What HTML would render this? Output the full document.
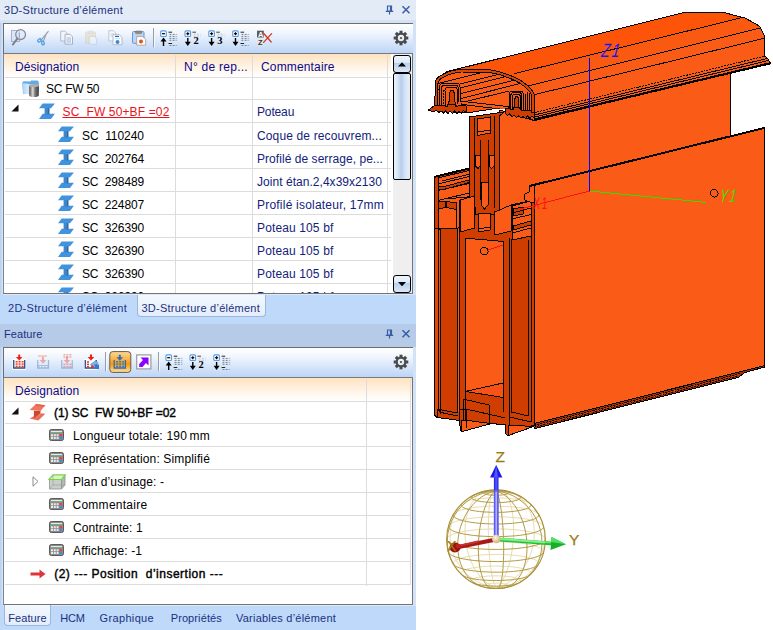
<!DOCTYPE html>
<html><head><meta charset="utf-8"><title>3D-Structure</title>
<style>
html,body{margin:0;padding:0;}
body{width:773px;height:630px;position:relative;overflow:hidden;background:#fff;font-family:"Liberation Sans",sans-serif;font-size:12px;color:#000;}
.abs{position:absolute;}
#left{position:absolute;left:0;top:0;width:416px;height:630px;background:#bfd9fa;overflow:hidden;}
.title{position:absolute;left:0;width:416px;color:#15245c;font-size:12px;line-height:20px;}
.title span{position:absolute;left:4px;top:0;white-space:nowrap;}
.tb{position:absolute;left:3px;width:410px;box-sizing:border-box;border-top:1px solid #6d6d6d;border-left:1px solid #6d6d6d;border-bottom:1px solid #7a7a7a;background:linear-gradient(#ffffff 0%,#f1f6fd 30%,#d3e3f9 70%,#bcd5f7 100%);}
.tree{position:absolute;background:#fff;overflow:hidden;}
.hdr{position:absolute;left:0;top:0;height:23px;background:linear-gradient(#ffe2c1,#fff3e4 55%,#ffffff);}
.t{position:absolute;white-space:nowrap;line-height:20px;height:20px;}
.h{color:#0a0a8c;}
.nv{color:#12227a;}
.b{font-weight:normal;-webkit-text-stroke:0.4px #000;}
.hl{position:absolute;height:1px;background:#dcdcdc;}
.vl{position:absolute;width:1px;background:#dcdcdc;}
.tabs{position:absolute;left:0;width:416px;height:22px;color:#15245c;font-size:12px;}
.tabs span{position:absolute;top:0;line-height:22px;white-space:nowrap;}
.atab{position:absolute;box-sizing:border-box;border:1px solid #9db7dc;border-top:none;border-radius:0 0 4px 4px;background:linear-gradient(#f4f8fe,#e3edfb);}
.sbtn{position:absolute;left:392px;width:18px;height:18px;box-sizing:border-box;border:1px solid #000;border-radius:3px;background:linear-gradient(#eef5fd 0%,#dfeaf8 40%,#b9cfee 45%,#d9e7f8 100%);}
</style></head><body>
<div id="left">
<div class="abs" style="left:0;top:0;width:416px;height:23px;background:#d5e2f3"></div>
<div class="abs" style="left:0;top:0;width:416px;height:20px;background:#e3ebf6"></div>
<span id="t_title1" class="t " style="left:4.00px;top:-0.01px;font-size:11px;letter-spacing:0.268px;color:#1b3180">3D-Structure d’élément</span>
<svg class="abs" style="left:385px;top:5px" width="28" height="10" viewBox="0 0 28 10"><path d="M2.5,1 h4 v5 h-4 Z M5.5,1 v5 M0.8,6.3 h7.4 M4.5,6.5 v3" stroke="#3a5ea6" stroke-width="1.2" fill="none"/><path d="M17.5,1.2 L24.5,8.2 M24.5,1.2 L17.5,8.2" stroke="#3a5ea6" stroke-width="1.5" fill="none"/></svg>
<div class="abs" style="left:0;top:23px;width:3px;height:271px;background:linear-gradient(90deg,#b4cdf0,#d9e7f7)"></div>
<div class="abs" style="left:413px;top:23px;width:3px;height:272px;background:#d3e2f6"></div>
<div class="abs" style="left:412px;top:54px;width:1px;height:240px;background:#747474"></div>
<div class="tb" id="tb1" style="top:23px;height:31px"><svg class="abs" style="left:-4px;top:-24px" width="416" height="60" viewBox="0 0 416 60"><rect x="11.5" y="30.5" width="8" height="11" fill="#d4e3f8" stroke="#7a7ab8" stroke-width="0.8" opacity="0.7"/><circle cx="20.6" cy="34.6" r="4.9" fill="#dbeafc" fill-opacity="0.75" stroke="#8a8a90" stroke-width="1.3"/><path d="M17.3,38.6 L12.8,44.6" stroke="#7d7d84" stroke-width="1.8" stroke-linecap="round"/><path d="M19.2,32.5 V38" stroke="#6a6ab0" stroke-width="0.7" opacity="0.8"/><g opacity="0.8"><path d="M41.2,40 L48.3,31.4 M43.2,41.8 L46.8,32.6" stroke="#8d949e" stroke-width="1.2" stroke-linecap="round"/><ellipse cx="39.4" cy="40.4" rx="1.9" ry="1.3" fill="none" stroke="#2b8fe0" stroke-width="1.3" transform="rotate(-35 39.4 40.4)"/><ellipse cx="42.9" cy="43" rx="1.3" ry="1.9" fill="none" stroke="#2b8fe0" stroke-width="1.3" transform="rotate(-20 42.9 43)"/></g><g opacity="0.85"><path d="M60.7,31.2 h4.3 l2,2 v7.8 h-6.3 Z" fill="#f4f6fa" stroke="#9aa4b8" stroke-width="0.8"/><path d="M65,34.3 h5 l2.5,2.5 v7.4 h-7.5 Z" fill="#f8f9fc" stroke="#8c96ac" stroke-width="0.8"/><path d="M66.5,38 h4.5 M66.5,40 h4.5 M66.5,42 h4.5" stroke="#7d9cc8" stroke-width="0.8"/></g><g opacity="0.5"><rect x="85.7" y="32" width="9.8" height="11.2" rx="1" fill="#e8d9b0" stroke="#cbb98a" stroke-width="0.7"/><rect x="88.3" y="31" width="4.6" height="2.4" rx="0.8" fill="#d8d8d8" stroke="#aaa" stroke-width="0.5"/><path d="M89.3,36.4 h5 l2.3,2.3 v5.5 h-7.3 Z" fill="#f6f8fc" stroke="#a9b4c8" stroke-width="0.7"/></g><g><path d="M108.8,30.7 h4.6 l2.3,2.3 v8 h-6.9 Z" fill="#f6f8fb" stroke="#b4bccb" stroke-width="0.8"/><path d="M110.3,34 h3.5 M110.3,36 h2.5" stroke="#b9c8e0" stroke-width="0.8"/><path d="M113,34.4 h6 l3,3 v7.3 h-9 Z" fill="#fbfcfe" stroke="#a4adbf" stroke-width="0.8"/><path d="M115,36.4 h4" stroke="#2a5bd0" stroke-width="1.2"/><path d="M115,38.6 h5" stroke="#c4d2e8" stroke-width="0.8"/><circle cx="117.5" cy="42" r="2" fill="#2f8fd8"/></g><g><rect x="132.5" y="31.5" width="11.5" height="11.8" rx="1.2" fill="#bcd6f7" stroke="#5b8fd0" stroke-width="0.9"/><rect x="135.4" y="31" width="6.4" height="2.6" rx="0.8" fill="#9a8472" stroke="#7a6656" stroke-width="0.5"/><path d="M136.7,36.4 h6 l3,3 v5.8 h-9 Z" fill="#fdfdfd" stroke="#a89890" stroke-width="0.8"/><circle cx="141" cy="41.6" r="2" fill="#e8531c"/></g><path d="M153.5,28 V47.3" stroke="#9a9cad" stroke-width="1"/><path d="M154.5,28 V47.3" stroke="#f5f8fd" stroke-width="1"/><rect x="160.7" y="30.9" width="5.6" height="5.6" rx="1" fill="#fdfdfd" stroke="#5b9be3" stroke-width="1.1"/><path d="M162.0,33.7 h3" stroke="#000" stroke-width="1.2"/><path d="M163.5,46 V40" stroke="#000" stroke-width="1.4"/><polygon points="160.5,41.6 163.5,37.6 166.5,41.6" fill="#000"/><path d="M168.5,32.2 h3.6 M168.5,43.5 h3.6" stroke="#222" stroke-width="1"/><path d="M169.3,34.4 h7" stroke="#6a9a8a" stroke-width="0.9" stroke-dasharray="2,1.2"/><path d="M170.1,34.4 h7" stroke="#8a70b8" stroke-width="0.9" stroke-dasharray="1,2.2" opacity="0.8"/><path d="M169.3,36.4 h7" stroke="#6a9a8a" stroke-width="0.9" stroke-dasharray="2,1.2"/><path d="M170.1,36.4 h7" stroke="#8a70b8" stroke-width="0.9" stroke-dasharray="1,2.2" opacity="0.8"/><path d="M169.3,38.4 h7" stroke="#6a9a8a" stroke-width="0.9" stroke-dasharray="2,1.2"/><path d="M170.1,38.4 h7" stroke="#8a70b8" stroke-width="0.9" stroke-dasharray="1,2.2" opacity="0.8"/><path d="M169.3,40.3 h7" stroke="#6a9a8a" stroke-width="0.9" stroke-dasharray="2,1.2"/><path d="M170.1,40.3 h7" stroke="#8a70b8" stroke-width="0.9" stroke-dasharray="1,2.2" opacity="0.8"/><path d="M169.3,45.5 h7" stroke="#6a9a8a" stroke-width="0.9" stroke-dasharray="2,1.2"/><path d="M170.1,45.5 h7" stroke="#8a70b8" stroke-width="0.9" stroke-dasharray="1,2.2" opacity="0.8"/><rect x="185.0" y="30.9" width="5.6" height="5.6" rx="1" fill="#fdfdfd" stroke="#5b9be3" stroke-width="1.1"/><path d="M186.3,33.7 h3" stroke="#000" stroke-width="1.2"/><path d="M187.8,32.2 v3" stroke="#000" stroke-width="1.2"/><path d="M187.8,38 V43" stroke="#000" stroke-width="1.4"/><polygon points="184.8,41.8 187.8,46 190.8,41.8" fill="#000"/><path d="M192.4,32.2 h3.6" stroke="#444" stroke-width="1"/><path d="M193.6,34.2 h7" stroke="#9ab8b0" stroke-width="0.9" stroke-dasharray="2,1.2" opacity="0.7"/><path d="M193.6,36.2 h7" stroke="#9ab8b0" stroke-width="0.9" stroke-dasharray="2,1.2" opacity="0.7"/><text x="193.4" y="44" font-family="Liberation Serif,serif" font-weight="bold" font-size="10.5" fill="#000">2</text><rect x="208.8" y="30.9" width="5.6" height="5.6" rx="1" fill="#fdfdfd" stroke="#5b9be3" stroke-width="1.1"/><path d="M210.1,33.7 h3" stroke="#000" stroke-width="1.2"/><path d="M211.6,32.2 v3" stroke="#000" stroke-width="1.2"/><path d="M211.6,38 V43" stroke="#000" stroke-width="1.4"/><polygon points="208.6,41.8 211.6,46 214.6,41.8" fill="#000"/><path d="M216.2,32.2 h3.6" stroke="#444" stroke-width="1"/><path d="M217.4,34.2 h7" stroke="#9ab8b0" stroke-width="0.9" stroke-dasharray="2,1.2" opacity="0.7"/><path d="M217.4,36.2 h7" stroke="#9ab8b0" stroke-width="0.9" stroke-dasharray="2,1.2" opacity="0.7"/><text x="217.2" y="44" font-family="Liberation Serif,serif" font-weight="bold" font-size="10.5" fill="#000">3</text><rect x="232.7" y="30.9" width="5.6" height="5.6" rx="1" fill="#fdfdfd" stroke="#5b9be3" stroke-width="1.1"/><path d="M234.0,33.7 h3" stroke="#000" stroke-width="1.2"/><path d="M235.5,32.2 v3" stroke="#000" stroke-width="1.2"/><path d="M235.5,38 V43" stroke="#000" stroke-width="1.4"/><polygon points="232.5,41.8 235.5,46 238.5,41.8" fill="#000"/><path d="M240.5,32.2 h3.6 M240.5,43.5 h3.6" stroke="#222" stroke-width="1"/><path d="M241.3,34.4 h7" stroke="#6a9a8a" stroke-width="0.9" stroke-dasharray="2,1.2"/><path d="M242.1,34.4 h7" stroke="#8a70b8" stroke-width="0.9" stroke-dasharray="1,2.2" opacity="0.8"/><path d="M241.3,36.4 h7" stroke="#6a9a8a" stroke-width="0.9" stroke-dasharray="2,1.2"/><path d="M242.1,36.4 h7" stroke="#8a70b8" stroke-width="0.9" stroke-dasharray="1,2.2" opacity="0.8"/><path d="M241.3,38.4 h7" stroke="#6a9a8a" stroke-width="0.9" stroke-dasharray="2,1.2"/><path d="M242.1,38.4 h7" stroke="#8a70b8" stroke-width="0.9" stroke-dasharray="1,2.2" opacity="0.8"/><path d="M241.3,40.3 h7" stroke="#6a9a8a" stroke-width="0.9" stroke-dasharray="2,1.2"/><path d="M242.1,40.3 h7" stroke="#8a70b8" stroke-width="0.9" stroke-dasharray="1,2.2" opacity="0.8"/><path d="M241.3,45.5 h7" stroke="#6a9a8a" stroke-width="0.9" stroke-dasharray="2,1.2"/><path d="M242.1,45.5 h7" stroke="#8a70b8" stroke-width="0.9" stroke-dasharray="1,2.2" opacity="0.8"/><rect x="257" y="30.7" width="6.8" height="6.8" fill="#5a5a5a"/><text x="257.9" y="36.9" font-family="Liberation Sans,sans-serif" font-weight="bold" font-size="7.5" fill="#fff">A</text><rect x="257" y="39.3" width="6.8" height="6" fill="#e6e6e6"/><text x="258" y="45.2" font-family="Liberation Sans,sans-serif" font-weight="bold" font-size="7.5" fill="#333">Z</text><path d="M264,33.8 L271.2,42 M271.6,33.6 L263.6,42.4" stroke="#d23a28" stroke-width="1.3" stroke-linecap="round"/><g fill="#4a4a4a"><rect x="399.5" y="30.7" width="3" height="3.2" transform="rotate(0.0 401 38)"/><rect x="399.5" y="30.7" width="3" height="3.2" transform="rotate(45.0 401 38)"/><rect x="399.5" y="30.7" width="3" height="3.2" transform="rotate(90.0 401 38)"/><rect x="399.5" y="30.7" width="3" height="3.2" transform="rotate(135.0 401 38)"/><rect x="399.5" y="30.7" width="3" height="3.2" transform="rotate(180.0 401 38)"/><rect x="399.5" y="30.7" width="3" height="3.2" transform="rotate(225.0 401 38)"/><rect x="399.5" y="30.7" width="3" height="3.2" transform="rotate(270.0 401 38)"/><rect x="399.5" y="30.7" width="3" height="3.2" transform="rotate(315.0 401 38)"/></g><circle cx="401" cy="38" r="4.3" fill="none" stroke="#4a4a4a" stroke-width="2.2"/><circle cx="401" cy="38" r="1.1" fill="#4a4a4a"/></svg></div>
<div class="abs" style="left:3px;top:54px;width:1px;height:240px;background:#7c8594"></div>
<div class="abs" style="left:3px;top:293px;width:410px;height:1px;background:#747474"></div>
<div class="abs" style="left:3px;top:294px;width:410px;height:1px;background:#dfe9f7"></div>
<div class="tree" id="tree1" style="left:4px;top:54px;width:408px;height:239px">
<div class="hdr" style="width:387px"></div>
<div class="abs" style="left:389px;top:0;width:19px;height:239px;background:#efefef"></div>
<div class="sbtn" style="left:389px;top:1px"><svg class="abs" style="left:4px;top:6px" width="8" height="5"><polygon points="0,4.5 4,0.3 8,4.5" fill="#000"/></svg></div>
<div class="sbtn" style="left:389px;top:19px;height:107px;border-radius:2px;background:linear-gradient(90deg,#eaf2fc 0%,#dbe7f7 20%,#b7cdec 45%,#d6e4f6 70%,#e6effa 100%)"></div>
<div class="sbtn" style="left:389px;top:221px"><svg class="abs" style="left:4px;top:6px" width="8" height="5"><polygon points="0,0 8,0 4,4.3" fill="#000"/></svg></div>
<div class="hl" style="left:1px;top:23px;width:386px"></div>
<div class="hl" style="left:1px;top:45px;width:386px"></div>
<div class="hl" style="left:1px;top:68px;width:386px"></div>
<div class="hl" style="left:1px;top:91px;width:386px"></div>
<div class="hl" style="left:1px;top:114px;width:386px"></div>
<div class="hl" style="left:1px;top:137px;width:386px"></div>
<div class="hl" style="left:1px;top:160px;width:386px"></div>
<div class="hl" style="left:1px;top:183px;width:386px"></div>
<div class="hl" style="left:1px;top:206px;width:386px"></div>
<div class="hl" style="left:1px;top:229px;width:386px"></div>
<div class="vl" style="left:171px;top:1px;height:238px"></div>
<div class="vl" style="left:248px;top:1px;height:238px"></div>
<div class="vl" style="left:383px;top:1px;height:238px"></div>
<span id="t_h1" class="t h" style="left:11.00px;top:2.74px;font-size:12px;letter-spacing:0.084px;">Désignation</span>
<span id="t_h2" class="t h" style="left:180.00px;top:2.74px;font-size:12px;letter-spacing:0.256px;">N° de rep...</span>
<span id="t_h3" class="t h" style="left:257.00px;top:2.74px;font-size:12px;letter-spacing:0.152px;">Commentaire</span>
<svg class="abs" style="left:17px;top:25.6px" width="19" height="18" viewBox="0 0 19 18"><defs><linearGradient id="cy1" x1="0" x2="1"><stop offset="0" stop-color="#4e4e4e"/><stop offset="0.38" stop-color="#dedede"/><stop offset="0.6" stop-color="#7a7a7a"/><stop offset="1" stop-color="#3c3c3c"/></linearGradient><linearGradient id="fo1" x1="0" x2="1"><stop offset="0" stop-color="#a8d0f2"/><stop offset="0.5" stop-color="#d6e9f9"/><stop offset="1" stop-color="#b6d8f4"/></linearGradient></defs><path d="M1.2,2.6 L2.6,1.2 L9.2,1.6 L10.2,0.5 L16.6,0.5 L17.8,2 L17.8,12 L2,14 Z" fill="#5eacea"/><path d="M1.2,3 L12,4.6 L12,13.5 L2.4,14.2 Z" fill="url(#fo1)"/><path d="M8.2,5.6 h9.6 v9.4 a4.8,2 0 0 1 -9.6,0 Z" fill="url(#cy1)"/><ellipse cx="13" cy="5.6" rx="4.8" ry="1.7" fill="#b4aca6"/></svg>
<span id="t_r0" class="t " style="left:42.00px;top:25.14px;font-size:12px;letter-spacing:-0.268px;">SC FW 50</span>
<svg class="abs" style="left:35px;top:49.3px" width="17" height="17" viewBox="0 0 17 17"><polygon points="3.7,10.8 15.9,10.8 12,16 0,16" fill="#4093dc"/><rect x="5.6" y="5" width="2.6" height="6.3" fill="#3b86cc"/><rect x="8.2" y="5" width="2.3" height="6.3" fill="#2a69a8"/><polygon points="3.7,0.4 15.9,0.4 12,5.3 0,5.3" fill="#4093dc"/></svg>
<svg class="abs" style="left:6.5px;top:50.4px" width="8" height="8" viewBox="0 0 8 8"><polygon points="7.5,0.5 7.5,7.5 0.5,7.5" fill="#111"/></svg>
<span id="t_r1" class="t " style="left:58.50px;top:47.84px;font-size:12px;letter-spacing:0.143px;color:#e8141c;text-decoration:underline;">SC&nbsp; FW 50+BF =02</span>
<span id="t_c1" class="t nv" style="left:253.00px;top:47.84px;font-size:12px;letter-spacing:-0.141px;">Poteau</span>
<svg class="abs" style="left:54px;top:72.1px" width="17" height="17" viewBox="0 0 17 17"><polygon points="3.7,10.8 15.9,10.8 12,16 0,16" fill="#4093dc"/><rect x="5.6" y="5" width="2.6" height="6.3" fill="#3b86cc"/><rect x="8.2" y="5" width="2.3" height="6.3" fill="#2a69a8"/><polygon points="3.7,0.4 15.9,0.4 12,5.3 0,5.3" fill="#4093dc"/></svg>
<span id="t_r2" class="t " style="left:78.00px;top:71.74px;font-size:12px;letter-spacing:-0.050px;">SC&nbsp; 110240</span>
<span id="t_c2" class="t nv" style="left:253.00px;top:71.74px;font-size:12px;letter-spacing:0.140px;">Coque de recouvrem...</span>
<svg class="abs" style="left:54px;top:95.1px" width="17" height="17" viewBox="0 0 17 17"><polygon points="3.7,10.8 15.9,10.8 12,16 0,16" fill="#4093dc"/><rect x="5.6" y="5" width="2.6" height="6.3" fill="#3b86cc"/><rect x="8.2" y="5" width="2.3" height="6.3" fill="#2a69a8"/><polygon points="3.7,0.4 15.9,0.4 12,5.3 0,5.3" fill="#4093dc"/></svg>
<span id="t_r3" class="t " style="left:78.00px;top:94.74px;font-size:12px;letter-spacing:-0.139px;">SC&nbsp; 202764</span>
<span id="t_c3" class="t nv" style="left:253.00px;top:94.74px;font-size:12px;letter-spacing:0.051px;">Profilé de serrage, pe...</span>
<svg class="abs" style="left:54px;top:118.1px" width="17" height="17" viewBox="0 0 17 17"><polygon points="3.7,10.8 15.9,10.8 12,16 0,16" fill="#4093dc"/><rect x="5.6" y="5" width="2.6" height="6.3" fill="#3b86cc"/><rect x="8.2" y="5" width="2.3" height="6.3" fill="#2a69a8"/><polygon points="3.7,0.4 15.9,0.4 12,5.3 0,5.3" fill="#4093dc"/></svg>
<span id="t_r4" class="t " style="left:78.00px;top:117.74px;font-size:12px;letter-spacing:-0.139px;">SC&nbsp; 298489</span>
<span id="t_c4" class="t nv" style="left:253.00px;top:117.74px;font-size:12px;letter-spacing:0.040px;">Joint étan.2,4x39x2130</span>
<svg class="abs" style="left:54px;top:141.1px" width="17" height="17" viewBox="0 0 17 17"><polygon points="3.7,10.8 15.9,10.8 12,16 0,16" fill="#4093dc"/><rect x="5.6" y="5" width="2.6" height="6.3" fill="#3b86cc"/><rect x="8.2" y="5" width="2.3" height="6.3" fill="#2a69a8"/><polygon points="3.7,0.4 15.9,0.4 12,5.3 0,5.3" fill="#4093dc"/></svg>
<span id="t_r5" class="t " style="left:78.00px;top:140.74px;font-size:12px;letter-spacing:-0.139px;">SC&nbsp; 224807</span>
<span id="t_c5" class="t nv" style="left:253.00px;top:140.74px;font-size:12px;letter-spacing:0.215px;">Profilé isolateur, 17mm</span>
<svg class="abs" style="left:54px;top:164.1px" width="17" height="17" viewBox="0 0 17 17"><polygon points="3.7,10.8 15.9,10.8 12,16 0,16" fill="#4093dc"/><rect x="5.6" y="5" width="2.6" height="6.3" fill="#3b86cc"/><rect x="8.2" y="5" width="2.3" height="6.3" fill="#2a69a8"/><polygon points="3.7,0.4 15.9,0.4 12,5.3 0,5.3" fill="#4093dc"/></svg>
<span id="t_r6" class="t " style="left:78.00px;top:163.74px;font-size:12px;letter-spacing:-0.139px;">SC&nbsp; 326390</span>
<span id="t_c6" class="t nv" style="left:253.00px;top:163.74px;font-size:12px;letter-spacing:0.128px;">Poteau 105 bf</span>
<svg class="abs" style="left:54px;top:187.1px" width="17" height="17" viewBox="0 0 17 17"><polygon points="3.7,10.8 15.9,10.8 12,16 0,16" fill="#4093dc"/><rect x="5.6" y="5" width="2.6" height="6.3" fill="#3b86cc"/><rect x="8.2" y="5" width="2.3" height="6.3" fill="#2a69a8"/><polygon points="3.7,0.4 15.9,0.4 12,5.3 0,5.3" fill="#4093dc"/></svg>
<span id="t_r7" class="t " style="left:78.00px;top:186.74px;font-size:12px;letter-spacing:-0.139px;">SC&nbsp; 326390</span>
<span id="t_c7" class="t nv" style="left:253.00px;top:186.74px;font-size:12px;letter-spacing:0.128px;">Poteau 105 bf</span>
<svg class="abs" style="left:54px;top:210.1px" width="17" height="17" viewBox="0 0 17 17"><polygon points="3.7,10.8 15.9,10.8 12,16 0,16" fill="#4093dc"/><rect x="5.6" y="5" width="2.6" height="6.3" fill="#3b86cc"/><rect x="8.2" y="5" width="2.3" height="6.3" fill="#2a69a8"/><polygon points="3.7,0.4 15.9,0.4 12,5.3 0,5.3" fill="#4093dc"/></svg>
<span id="t_r8" class="t " style="left:78.00px;top:209.74px;font-size:12px;letter-spacing:-0.139px;">SC&nbsp; 326390</span>
<span id="t_c8" class="t nv" style="left:253.00px;top:209.74px;font-size:12px;letter-spacing:0.128px;">Poteau 105 bf</span>
<svg class="abs" style="left:54px;top:233.1px" width="17" height="17" viewBox="0 0 17 17"><polygon points="3.7,10.8 15.9,10.8 12,16 0,16" fill="#4093dc"/><rect x="5.6" y="5" width="2.6" height="6.3" fill="#3b86cc"/><rect x="8.2" y="5" width="2.3" height="6.3" fill="#2a69a8"/><polygon points="3.7,0.4 15.9,0.4 12,5.3 0,5.3" fill="#4093dc"/></svg>
<span id="t_r9" class="t " style="left:78.00px;top:232.74px;font-size:12px;letter-spacing:-0.139px;">SC&nbsp; 326390</span>
<span id="t_c9" class="t nv" style="left:253.00px;top:232.74px;font-size:12px;letter-spacing:0.128px;">Poteau 105 bf</span>
</div>
<div class="atab" style="left:137px;top:295px;width:129px;height:22px"></div>
<span id="t_tab1" class="t " style="left:8.00px;top:298.39px;font-size:11px;letter-spacing:0.268px;color:#1b3180">2D-Structure d’élément</span>
<span id="t_tab2" class="t " style="left:141.50px;top:298.39px;font-size:11px;letter-spacing:0.245px;color:#1b3180">3D-Structure d’élément</span>
<div class="abs" style="left:0;top:324px;width:416px;height:23px;background:#b6cbe8"></div>
<span id="t_title2" class="t " style="left:4.00px;top:323.89px;font-size:11px;letter-spacing:0.083px;color:#1b3180">Feature</span>
<svg class="abs" style="left:385px;top:329px" width="28" height="10" viewBox="0 0 28 10"><path d="M2.5,1 h4 v5 h-4 Z M5.5,1 v5 M0.8,6.3 h7.4 M4.5,6.5 v3" stroke="#3a5ea6" stroke-width="1.2" fill="none"/><path d="M17.5,1.2 L24.5,8.2 M24.5,1.2 L17.5,8.2" stroke="#3a5ea6" stroke-width="1.5" fill="none"/></svg>
<div class="abs" style="left:0;top:347px;width:3px;height:258px;background:linear-gradient(90deg,#b4cdf0,#d9e7f7)"></div>
<div class="abs" style="left:413px;top:347px;width:3px;height:259px;background:#d3e2f6"></div>
<div class="abs" style="left:412px;top:378px;width:1px;height:227px;background:#747474"></div>
<div class="tb" id="tb2" style="top:347px;height:31px"><svg class="abs" style="left:-4px;top:-348px" width="416" height="400" viewBox="0 0 416 400"><rect x="12.3" y="359" width="13.7" height="11" fill="#fff" opacity="0.9"/><path d="M13.7,360 V368 H24.7 V360" fill="none" stroke="#2b4f86" stroke-width="1.3"/><rect x="15.6" y="361.0" width="2" height="1.5" fill="#f03a20" opacity="1"/><rect x="18.6" y="361.0" width="2" height="1.5" fill="#f03a20" opacity="1"/><rect x="21.6" y="361.0" width="2" height="1.5" fill="#f03a20" opacity="1"/><rect x="15.6" y="363.3" width="2" height="1.5" fill="#f03a20" opacity="1"/><rect x="18.6" y="363.3" width="2" height="1.5" fill="#f03a20" opacity="1"/><rect x="21.6" y="363.3" width="2" height="1.5" fill="#f03a20" opacity="1"/><rect x="15.6" y="365.6" width="2" height="1.5" fill="#f03a20" opacity="1"/><rect x="18.6" y="365.6" width="2" height="1.5" fill="#f03a20" opacity="1"/><rect x="21.6" y="365.6" width="2" height="1.5" fill="#f03a20" opacity="1"/><g opacity="1"><path d="M19.2,354.6 V358.6" stroke="#f02010" stroke-width="2"/><polygon points="15.899999999999999,357.0 22.5,357.0 19.2,360.6" fill="#f02010"/></g><g opacity="0.45"><path d="M37.7,360 V368 H48.5 V360" fill="none" stroke="#5b7fb5" stroke-width="1.3"/><rect x="38.3" y="365" width="10" height="3" fill="#5b7fb5"/><path d="M38,356 h9" stroke="#f03a20" stroke-width="1"/></g><rect x="39.4" y="365.8" width="2" height="1.5" fill="#fff" opacity="0.8"/><rect x="42.4" y="365.8" width="2" height="1.5" fill="#fff" opacity="0.8"/><rect x="45.4" y="365.8" width="2" height="1.5" fill="#fff" opacity="0.8"/><g opacity="0.4"><path d="M43,357 V361.5" stroke="#f03a20" stroke-width="2"/><polygon points="39.7,359.9 46.3,359.9 43,363.5" fill="#f03a20"/></g><g opacity="0.45"><path d="M61.7,360 V368 H72.3 V360" fill="none" stroke="#5b7fb5" stroke-width="1.3"/></g><rect x="63.4" y="354.0" width="2" height="1.5" fill="#f03a20" opacity="0.4"/><rect x="66.4" y="354.0" width="2" height="1.5" fill="#f03a20" opacity="0.4"/><rect x="69.4" y="354.0" width="2" height="1.5" fill="#f03a20" opacity="0.4"/><rect x="63.4" y="356.3" width="2" height="1.5" fill="#f03a20" opacity="0.4"/><rect x="66.4" y="356.3" width="2" height="1.5" fill="#f03a20" opacity="0.4"/><rect x="69.4" y="356.3" width="2" height="1.5" fill="#f03a20" opacity="0.4"/><rect x="63.4" y="363.5" width="2" height="1.5" fill="#f03a20" opacity="0.4"/><rect x="66.4" y="363.5" width="2" height="1.5" fill="#f03a20" opacity="0.4"/><rect x="69.4" y="363.5" width="2" height="1.5" fill="#f03a20" opacity="0.4"/><rect x="63.4" y="365.8" width="2" height="1.5" fill="#f03a20" opacity="0.4"/><rect x="66.4" y="365.8" width="2" height="1.5" fill="#f03a20" opacity="0.4"/><rect x="69.4" y="365.8" width="2" height="1.5" fill="#f03a20" opacity="0.4"/><g opacity="0.4"><path d="M67,356.5 V361.5" stroke="#f03a20" stroke-width="2"/><polygon points="63.7,359.9 70.3,359.9 67,363.5" fill="#f03a20"/></g><rect x="84" y="359" width="13.5" height="11" fill="#fff" opacity="0.85"/><path d="M85.3,360 V368 H96.3 V360" fill="none" stroke="#2b4f86" stroke-width="1.3"/><rect x="87" y="361.3" width="2" height="1.5" fill="#f03a20"/><rect x="87" y="363.6" width="2" height="1.5" fill="#f03a20"/><rect x="87" y="365.9" width="2" height="1.5" fill="#f03a20"/><g opacity="1"><path d="M91,354.6 V358.6" stroke="#f02010" stroke-width="2"/><polygon points="87.7,357.0 94.3,357.0 91,360.6" fill="#f02010"/></g><polygon points="90.5,364.5 96,360.5 98,363.5 92.5,367" fill="#7fb0e6" stroke="#4a7fc0" stroke-width="0.6"/><rect x="94.5" y="364.5" width="4.5" height="4.5" fill="#3c78c8"/><circle cx="92.3" cy="366.8" r="1.3" fill="#e8281c"/><path d="M105.5,352 V371.3" stroke="#9a9cad" stroke-width="1"/><path d="M106.5,352 V371.3" stroke="#f5f8fd" stroke-width="1"/><defs><linearGradient id="ob" x1="0" y1="0" x2="0" y2="1"><stop offset="0" stop-color="#fcd79a"/><stop offset="0.4" stop-color="#f8b040"/><stop offset="0.6" stop-color="#f39a10"/><stop offset="1" stop-color="#fde0a0"/></linearGradient></defs><rect x="109.8" y="351.6" width="21" height="20.8" rx="3" fill="url(#ob)" stroke="#6a5a48" stroke-width="1"/><path d="M114.2,360 V368 H125.4 V360" fill="none" stroke="#2f6eb5" stroke-width="1.3"/><rect x="116.2" y="361.0" width="2" height="1.5" fill="#3a78c0" opacity="1"/><rect x="119.2" y="361.0" width="2" height="1.5" fill="#3a78c0" opacity="1"/><rect x="122.2" y="361.0" width="2" height="1.5" fill="#3a78c0" opacity="1"/><rect x="116.2" y="363.3" width="2" height="1.5" fill="#3a78c0" opacity="1"/><rect x="119.2" y="363.3" width="2" height="1.5" fill="#3a78c0" opacity="1"/><rect x="122.2" y="363.3" width="2" height="1.5" fill="#3a78c0" opacity="1"/><rect x="116.2" y="365.6" width="2" height="1.5" fill="#3a78c0" opacity="1"/><rect x="119.2" y="365.6" width="2" height="1.5" fill="#3a78c0" opacity="1"/><rect x="122.2" y="365.6" width="2" height="1.5" fill="#3a78c0" opacity="1"/><g opacity="1"><path d="M119.8,354.8 V358.8" stroke="#2f6eb5" stroke-width="2"/><polygon points="116.5,357.2 123.1,357.2 119.8,360.8" fill="#2f6eb5"/></g><rect x="136.7" y="354.9" width="14.2" height="14" fill="#fff" stroke="#9a9a9a" stroke-width="1.2"/><polygon points="140.5,357.5 148.5,357.5 148.5,365.5 146,363 142.5,367 139.2,367 139.2,364 143,360 " fill="#8a00ff"/><path d="M158.5,352 V371.3" stroke="#9a9cad" stroke-width="1"/><path d="M159.5,352 V371.3" stroke="#f5f8fd" stroke-width="1"/><g transform="translate(0,324)"><rect x="165.9" y="30.9" width="5.6" height="5.6" rx="1" fill="#fdfdfd" stroke="#5b9be3" stroke-width="1.1"/><path d="M167.2,33.7 h3" stroke="#000" stroke-width="1.2"/><path d="M168.7,46 V40" stroke="#000" stroke-width="1.4"/><polygon points="165.7,41.6 168.7,37.6 171.7,41.6" fill="#000"/><path d="M173.7,32.2 h3.6 M173.7,43.5 h3.6" stroke="#222" stroke-width="1"/><path d="M174.5,34.4 h7" stroke="#6a9a8a" stroke-width="0.9" stroke-dasharray="2,1.2"/><path d="M175.3,34.4 h7" stroke="#8a70b8" stroke-width="0.9" stroke-dasharray="1,2.2" opacity="0.8"/><path d="M174.5,36.4 h7" stroke="#6a9a8a" stroke-width="0.9" stroke-dasharray="2,1.2"/><path d="M175.3,36.4 h7" stroke="#8a70b8" stroke-width="0.9" stroke-dasharray="1,2.2" opacity="0.8"/><path d="M174.5,38.4 h7" stroke="#6a9a8a" stroke-width="0.9" stroke-dasharray="2,1.2"/><path d="M175.3,38.4 h7" stroke="#8a70b8" stroke-width="0.9" stroke-dasharray="1,2.2" opacity="0.8"/><path d="M174.5,40.3 h7" stroke="#6a9a8a" stroke-width="0.9" stroke-dasharray="2,1.2"/><path d="M175.3,40.3 h7" stroke="#8a70b8" stroke-width="0.9" stroke-dasharray="1,2.2" opacity="0.8"/><path d="M174.5,45.5 h7" stroke="#6a9a8a" stroke-width="0.9" stroke-dasharray="2,1.2"/><path d="M175.3,45.5 h7" stroke="#8a70b8" stroke-width="0.9" stroke-dasharray="1,2.2" opacity="0.8"/><rect x="190.0" y="30.9" width="5.6" height="5.6" rx="1" fill="#fdfdfd" stroke="#5b9be3" stroke-width="1.1"/><path d="M191.3,33.7 h3" stroke="#000" stroke-width="1.2"/><path d="M192.8,32.2 v3" stroke="#000" stroke-width="1.2"/><path d="M192.8,38 V43" stroke="#000" stroke-width="1.4"/><polygon points="189.8,41.8 192.8,46 195.8,41.8" fill="#000"/><path d="M197.4,32.2 h3.6" stroke="#444" stroke-width="1"/><path d="M198.6,34.2 h7" stroke="#9ab8b0" stroke-width="0.9" stroke-dasharray="2,1.2" opacity="0.7"/><path d="M198.6,36.2 h7" stroke="#9ab8b0" stroke-width="0.9" stroke-dasharray="2,1.2" opacity="0.7"/><text x="198.4" y="44" font-family="Liberation Serif,serif" font-weight="bold" font-size="10.5" fill="#000">2</text><rect x="213.8" y="30.9" width="5.6" height="5.6" rx="1" fill="#fdfdfd" stroke="#5b9be3" stroke-width="1.1"/><path d="M215.1,33.7 h3" stroke="#000" stroke-width="1.2"/><path d="M216.6,32.2 v3" stroke="#000" stroke-width="1.2"/><path d="M216.6,38 V43" stroke="#000" stroke-width="1.4"/><polygon points="213.6,41.8 216.6,46 219.6,41.8" fill="#000"/><path d="M221.6,32.2 h3.6 M221.6,43.5 h3.6" stroke="#222" stroke-width="1"/><path d="M222.4,34.4 h7" stroke="#6a9a8a" stroke-width="0.9" stroke-dasharray="2,1.2"/><path d="M223.2,34.4 h7" stroke="#8a70b8" stroke-width="0.9" stroke-dasharray="1,2.2" opacity="0.8"/><path d="M222.4,36.4 h7" stroke="#6a9a8a" stroke-width="0.9" stroke-dasharray="2,1.2"/><path d="M223.2,36.4 h7" stroke="#8a70b8" stroke-width="0.9" stroke-dasharray="1,2.2" opacity="0.8"/><path d="M222.4,38.4 h7" stroke="#6a9a8a" stroke-width="0.9" stroke-dasharray="2,1.2"/><path d="M223.2,38.4 h7" stroke="#8a70b8" stroke-width="0.9" stroke-dasharray="1,2.2" opacity="0.8"/><path d="M222.4,40.3 h7" stroke="#6a9a8a" stroke-width="0.9" stroke-dasharray="2,1.2"/><path d="M223.2,40.3 h7" stroke="#8a70b8" stroke-width="0.9" stroke-dasharray="1,2.2" opacity="0.8"/><path d="M222.4,45.5 h7" stroke="#6a9a8a" stroke-width="0.9" stroke-dasharray="2,1.2"/><path d="M223.2,45.5 h7" stroke="#8a70b8" stroke-width="0.9" stroke-dasharray="1,2.2" opacity="0.8"/><g fill="#4a4a4a"><rect x="399.5" y="30.7" width="3" height="3.2" transform="rotate(0.0 401 38)"/><rect x="399.5" y="30.7" width="3" height="3.2" transform="rotate(45.0 401 38)"/><rect x="399.5" y="30.7" width="3" height="3.2" transform="rotate(90.0 401 38)"/><rect x="399.5" y="30.7" width="3" height="3.2" transform="rotate(135.0 401 38)"/><rect x="399.5" y="30.7" width="3" height="3.2" transform="rotate(180.0 401 38)"/><rect x="399.5" y="30.7" width="3" height="3.2" transform="rotate(225.0 401 38)"/><rect x="399.5" y="30.7" width="3" height="3.2" transform="rotate(270.0 401 38)"/><rect x="399.5" y="30.7" width="3" height="3.2" transform="rotate(315.0 401 38)"/></g><circle cx="401" cy="38" r="4.3" fill="none" stroke="#4a4a4a" stroke-width="2.2"/><circle cx="401" cy="38" r="1.1" fill="#4a4a4a"/></g></svg></div>
<div class="abs" style="left:3px;top:378px;width:1px;height:227px;background:#7c8594"></div>
<div class="abs" style="left:3px;top:604px;width:410px;height:1px;background:#747474"></div>
<div class="abs" style="left:3px;top:605px;width:410px;height:1px;background:#dfe9f7"></div>
<div class="tree" id="tree2" style="left:4px;top:378px;width:408px;height:226px">
<div class="hdr" style="width:408px"></div>
<div class="hl" style="left:1px;top:23px;width:406px"></div>
<div class="hl" style="left:1px;top:45px;width:406px"></div>
<div class="hl" style="left:1px;top:68px;width:406px"></div>
<div class="hl" style="left:1px;top:91px;width:406px"></div>
<div class="hl" style="left:1px;top:114px;width:406px"></div>
<div class="hl" style="left:1px;top:137px;width:406px"></div>
<div class="hl" style="left:1px;top:160px;width:406px"></div>
<div class="hl" style="left:1px;top:183px;width:406px"></div>
<div class="hl" style="left:1px;top:206px;width:406px"></div>
<div class="vl" style="left:362px;top:1px;height:207px"></div>
<div class="vl" style="left:406px;top:1px;height:206px"></div>
<span id="t_h4" class="t h" style="left:11.00px;top:2.64px;font-size:12px;letter-spacing:0.084px;">Désignation</span>
<svg class="abs" style="left:25px;top:26.4px" width="17" height="17" viewBox="0 0 17 17"><polygon points="0.6,14.4 4.9,12.3 5.7,14.2 12.3,9.2 16.3,9.8 9.4,16.6" fill="#ee6c58"/><polygon points="4.9,6.7 11.5,7.1 11.5,9.6 5.7,14.2 4.9,14.2" fill="#cc4830"/><polygon points="7,0.1 16.3,1.2 11.5,7.1 0.6,5.9" fill="#f07560"/><polygon points="7,0.1 16.3,1.2 15,2.8 6,1.5" fill="#e8604a"/></svg>
<svg class="abs" style="left:6.5px;top:29.3px" width="8" height="8" viewBox="0 0 8 8"><polygon points="7.5,0.5 7.5,7.5 0.5,7.5" fill="#111"/></svg>
<span id="t_f0" class="t b" style="left:50.00px;top:24.74px;font-size:12px;letter-spacing:-0.036px;">(1) SC&nbsp; FW 50+BF =02</span>
<svg class="abs" style="left:45.3px;top:51.02px" width="15" height="12" viewBox="0 0 15 12"><rect x="0.5" y="0.5" width="14" height="11" rx="1.8" fill="#8c8c8c" stroke="#5c5c5c"/><rect x="2" y="2" width="11" height="1.2" fill="#e8e8e8"/><rect x="2" y="3.6" width="11" height="1" fill="#6aa57a"/><rect x="2" y="5.2" width="2" height="4.8" fill="#e9e9e9"/><rect x="4.8" y="5.2" width="2" height="4.8" fill="#e9e9e9"/><rect x="7.6" y="5.2" width="2" height="4.8" fill="#e9e9e9"/><rect x="10.5" y="5.1" width="2.5" height="2.3" fill="#ff3b30"/><rect x="10.5" y="7.7" width="2.5" height="2.4" fill="#2f8df5"/><rect x="2" y="7.3" width="8" height="0.7" fill="#8c8c8c"/></svg>
<span id="t_f1" class="t " style="left:69.00px;top:47.76px;font-size:12px;letter-spacing:0.196px;">Longueur totale: 190&#8201;mm</span>
<svg class="abs" style="left:45.3px;top:74.04px" width="15" height="12" viewBox="0 0 15 12"><rect x="0.5" y="0.5" width="14" height="11" rx="1.8" fill="#8c8c8c" stroke="#5c5c5c"/><rect x="2" y="2" width="11" height="1.2" fill="#e8e8e8"/><rect x="2" y="3.6" width="11" height="1" fill="#6aa57a"/><rect x="2" y="5.2" width="2" height="4.8" fill="#e9e9e9"/><rect x="4.8" y="5.2" width="2" height="4.8" fill="#e9e9e9"/><rect x="7.6" y="5.2" width="2" height="4.8" fill="#e9e9e9"/><rect x="10.5" y="5.1" width="2.5" height="2.3" fill="#ff3b30"/><rect x="10.5" y="7.7" width="2.5" height="2.4" fill="#2f8df5"/><rect x="2" y="7.3" width="8" height="0.7" fill="#8c8c8c"/></svg>
<span id="t_f2" class="t " style="left:69.00px;top:70.78px;font-size:12px;letter-spacing:0.144px;">Représentation: Simplifié</span>
<svg class="abs" style="left:43.5px;top:95.96px" width="18" height="16" viewBox="0 0 18 16"><polygon points="1.5,5.5 13.5,5.5 13.5,15 1.5,15" fill="#c9cfc9" stroke="#8d938d" stroke-width="0.8"/><polygon points="13.5,5.5 17,1 17,11 13.5,15" fill="#b4bab4" stroke="#8d938d" stroke-width="0.8"/><polygon points="1,5.5 5,0.8 17.3,0.8 13.5,5.5" fill="#d9f5c4" stroke="#7fd14a" stroke-width="1.2"/><path d="M5,1 V11 L1.5,15 M5,11 H17" stroke="#9aa09a" stroke-width="0.7" fill="none"/></svg>
<svg class="abs" style="left:28px;top:97.96px" width="7" height="11" viewBox="0 0 7 11"><polygon points="1,0.8 6,5.5 1,10.2" fill="#fff" stroke="#8a8a8a" stroke-width="1"/></svg>
<span id="t_f3" class="t " style="left:69.00px;top:93.80px;font-size:12px;letter-spacing:0.095px;">Plan d’usinage: -</span>
<svg class="abs" style="left:45.3px;top:120.08px" width="15" height="12" viewBox="0 0 15 12"><rect x="0.5" y="0.5" width="14" height="11" rx="1.8" fill="#8c8c8c" stroke="#5c5c5c"/><rect x="2" y="2" width="11" height="1.2" fill="#e8e8e8"/><rect x="2" y="3.6" width="11" height="1" fill="#6aa57a"/><rect x="2" y="5.2" width="2" height="4.8" fill="#e9e9e9"/><rect x="4.8" y="5.2" width="2" height="4.8" fill="#e9e9e9"/><rect x="7.6" y="5.2" width="2" height="4.8" fill="#e9e9e9"/><rect x="10.5" y="5.1" width="2.5" height="2.3" fill="#ff3b30"/><rect x="10.5" y="7.7" width="2.5" height="2.4" fill="#2f8df5"/><rect x="2" y="7.3" width="8" height="0.7" fill="#8c8c8c"/></svg>
<span id="t_f4" class="t " style="left:68.50px;top:116.82px;font-size:12px;letter-spacing:0.261px;">Commentaire</span>
<svg class="abs" style="left:45.3px;top:143.1px" width="15" height="12" viewBox="0 0 15 12"><rect x="0.5" y="0.5" width="14" height="11" rx="1.8" fill="#8c8c8c" stroke="#5c5c5c"/><rect x="2" y="2" width="11" height="1.2" fill="#e8e8e8"/><rect x="2" y="3.6" width="11" height="1" fill="#6aa57a"/><rect x="2" y="5.2" width="2" height="4.8" fill="#e9e9e9"/><rect x="4.8" y="5.2" width="2" height="4.8" fill="#e9e9e9"/><rect x="7.6" y="5.2" width="2" height="4.8" fill="#e9e9e9"/><rect x="10.5" y="5.1" width="2.5" height="2.3" fill="#ff3b30"/><rect x="10.5" y="7.7" width="2.5" height="2.4" fill="#2f8df5"/><rect x="2" y="7.3" width="8" height="0.7" fill="#8c8c8c"/></svg>
<span id="t_f5" class="t " style="left:69.00px;top:139.84px;font-size:12px;letter-spacing:0.075px;">Contrainte: 1</span>
<svg class="abs" style="left:45.3px;top:166.12px" width="15" height="12" viewBox="0 0 15 12"><rect x="0.5" y="0.5" width="14" height="11" rx="1.8" fill="#8c8c8c" stroke="#5c5c5c"/><rect x="2" y="2" width="11" height="1.2" fill="#e8e8e8"/><rect x="2" y="3.6" width="11" height="1" fill="#6aa57a"/><rect x="2" y="5.2" width="2" height="4.8" fill="#e9e9e9"/><rect x="4.8" y="5.2" width="2" height="4.8" fill="#e9e9e9"/><rect x="7.6" y="5.2" width="2" height="4.8" fill="#e9e9e9"/><rect x="10.5" y="5.1" width="2.5" height="2.3" fill="#ff3b30"/><rect x="10.5" y="7.7" width="2.5" height="2.4" fill="#2f8df5"/><rect x="2" y="7.3" width="8" height="0.7" fill="#8c8c8c"/></svg>
<span id="t_f6" class="t " style="left:69.00px;top:162.86px;font-size:12px;letter-spacing:0.157px;">Affichage: -1</span>
<svg class="abs" style="left:26px;top:191.04px" width="16" height="10" viewBox="0 0 16 10"><path d="M0.5,3.6 H9.5 V0.5 L15.5,5 L9.5,9.5 V6.4 H0.5 Z" fill="#e0343c"/></svg>
<span id="t_f7" class="t b" style="left:50.20px;top:185.88px;font-size:12px;letter-spacing:0.494px;">(2) --- Position&nbsp; d’insertion ---</span>
</div>
<div class="atab" style="left:4px;top:605px;width:47px;height:21px"></div>
<span id="t_b1" class="t " style="left:8.30px;top:607.99px;font-size:11px;letter-spacing:0.054px;color:#1b3180">Feature</span>
<span id="t_b2" class="t " style="left:60.30px;top:607.99px;font-size:11px;letter-spacing:-0.221px;color:#1b3180">HCM</span>
<span id="t_b3" class="t " style="left:99.60px;top:607.99px;font-size:11px;letter-spacing:0.336px;color:#1b3180">Graphique</span>
<span id="t_b4" class="t " style="left:170.70px;top:607.99px;font-size:11px;letter-spacing:0.106px;color:#1b3180">Propriétés</span>
<span id="t_b5" class="t " style="left:236.00px;top:607.99px;font-size:11px;letter-spacing:0.221px;color:#1b3180">Variables d’élément</span>
</div>
<div id="view" class="abs" style="left:416px;top:0;width:357px;height:630px;background:#fff"></div>
<svg style="position:absolute;left:0;top:0" width="773" height="630" viewBox="0 0 773 630">
<g shape-rendering="crispEdges" stroke="#000" stroke-width="1" stroke-linejoin="round" fill="none">
<!-- ===== rear big face (light) ===== -->
<polygon fill="#fa5c17" points="499.5,110 534.5,119.5 730,73 730,138 534,189 534,205 511,205 499.5,210"/>
<!-- ===== column (isolator + clamp profile) ===== -->
<polygon fill="#cf3d00" points="469.5,117 504,112 499.5,116 499.5,210 494,212 494,240 475,240 475,207 469.5,207"/>
<path d="M474,118 V207 M494.5,116 V208"/>
<polygon fill="#fa5c17" points="477.5,119 490.5,117 490.5,133 477.5,135.5"/>
<path d="M477.5,132 L490.5,130"/>
<polygon fill="#fa5c17" points="475.5,155 480,155 480,166 478,168.5 475.5,166"/>
<polygon fill="#fa5c17" points="489,155 494,155 494,166 491.5,168.5 489,166"/>
<polygon fill="#fa5c17" points="481,182 488,182 488,205 484.5,209 481,205"/>
<path d="M480.5,140 V200 M488.5,140 V200"/>

<!-- ===== post (left block) ===== -->
<!-- silhouette dark -->
<polygon fill="#cf3d00" points="434.5,176.4 469,168 469.5,207 475,207 475,214 494,214 494,212 499.5,210 511,205 534,200 534,425 508.4,435.5 506,434.4 505.3,424.7 491.3,423.6 461.8,431.6 460.3,429.8 459.5,420.5 437,417.4 434.5,415"/>
<path d="M434.5,176.9 L469,168.5" stroke-width="2"/>
<!-- light regions in post top -->
<polygon fill="#fa5c17" points="438,178 469,170.5 469,214 458,228 438,228"/>
<polygon fill="#cf3d00" points="438,186.5 444,186.5 469,180 469,182.5 444,189.5 438,189.5"/>
<polygon fill="#cf3d00" points="438,202 445,201 445,207.5 438,209"/>
<polygon fill="#cf3d00" points="446.5,201.5 456,203 456,209.5 446.5,207.5"/>
<path d="M438,184 L469,176.5 M442,181 L469,174.3 M438,190.5 L469,183.5 M438,200.5 L469,193 M446,199 L469,196.8 M456,202 V228 M459,200 V229"/>
<!-- left outer strip light & walls -->
<polygon fill="#e04a08" points="434.5,228 438.2,229 438.2,409 437,417 434.5,415"/><polygon fill="#f05410" points="438.2,229 440.4,229 440.4,413 438.2,409"/>
<polygon stroke="none" fill="#fa5c17" points="457.5,229 460,229 460,412 457.5,412"/>
<path d="M440.4,229.5 V413.5 M438.2,229 V408.5 M457.2,229 V411 M459.8,229 V420 M465.5,238 V425"/>
<!-- central region light around trunk -->
<polygon fill="#fa5c17" points="460,200 474.5,196 474.5,228 460,232"/>
<polygon fill="#fa5c17" points="494.6,212 499.5,210 511,205 511,231 494.6,235"/>
<polygon fill="#fa5c17" points="478.7,213.5 490.3,213.5 490.3,230 478.7,232"/>
<path d="M478.7,229 L490.3,227"/>
<!-- inner hollow light face -->
<polygon fill="#fa5c17" points="465.4,238.1 503.1,241.5 503.1,383 465.4,391.4"/>
<!-- floor of hollow -->
<polygon fill="#fa5214" points="465.4,391.4 503.1,383 503.1,397.5"/>
<path d="M503.1,241.5 V412 M509.5,238 V428 M511.5,239 V412 M528.3,240 V416 M531,200 V422"/>
<!-- right wall top ribbing -->
<polygon fill="#fa5c17" points="512,206 531,201 531,236 512,240"/>
<polygon fill="#cf3d00" points="513,209 523,207 523,214 513,216"/>
<polygon fill="#cf3d00" points="513,226 531,221 531,225 513,230"/>
<path d="M512,213 L531,208 M512,219 L531,214.5 M512,233 L531,228"/>
<!-- bottom details -->
<polygon fill="#fa5c17" points="461.8,431.6 461.5,421 468,420.5 491.3,423.6"/>
<polygon fill="#fa5c17" points="508.4,435.5 508,425 533.5,426.5"/>
<path d="M441,412.5 L458,416 M437,409 L457.5,413 L457.5,409 M463,399 L463,420 M463,399 L489,405 L489,425 M459.5,410 L466,409 L505.3,418 M466,409 V428 M511.5,412 L528.3,416 M509.5,417 L531,422"/>

<!-- ===== front panel ===== -->
<polygon fill="#fa5c17" points="534.3,184.3 764.5,127.4 764.7,365.6 534.3,423.5"/>
<polygon fill="#fa5c17" points="529.5,185.7 534.3,184.5 534.3,203 530.7,202.4 524.8,200 524.8,194 529.5,191.7"/>
<path d="M529.5,186 L764.5,127.9" stroke-width="2"/>
<!-- bottom band of front panel -->
<polygon fill="#a83000" points="534.3,423.5 764.7,365.6 764.7,367 745,372.5 738,377.5 534.3,428.6"/>
<path d="M534.3,425.3 L740,373.6 M534.3,427 L738,376" stroke-dasharray="2,1" stroke="#000"/>
<path d="M534.3,426.2 L739,374.8" stroke-dasharray="1,2" stroke="#e04a08"/>

<!-- ===== cap top surface ===== -->
<polygon fill="#fd5409" points="435,84 441,75.5 447,71.6 684.7,12.4 723.5,12.4 745.4,18.2 759.7,26.2 764.4,35.7 764.9,56 771,63 534.5,120.5 505,113 505,108.5 498.3,108 466.5,113 429,110 435,105"/>
<polygon stroke="none" fill="#fa5912" points="514,73.8 741,17.8 759.7,28 526.5,86.3"/>
<polygon stroke="none" fill="#fa5c17" points="526.5,86.3 759.7,28 764.4,38 764.9,56 770.5,63 534.5,120 534.5,95"/>
<path d="M514,73.8 L741,17.8 M526.5,86.3 L759.7,28 M533.6,94.9 L764.3,38.3 M534.5,115 L767,58.5 M534.5,117 L768.5,60.5"/>
<path d="M764.6,35.7 V56.5"/>
<path d="M534.5,112.5 L765,56" stroke-dasharray="2,1"/>
<path d="M534.5,119.5 L770.5,63.2" stroke-width="2.2"/>
<!-- arch interior -->
<clipPath id="archclip"><path d="M436.5,106 L436.8,84 Q438,78 442.5,76.6 Q451,71.5 461.5,70.8 L489,71.1 Q504,73.5 519.5,81.5 Q530,88 532.8,95 L533,113 L505,109 L466,107 Z"/></clipPath>
<g clip-path="url(#archclip)">
<rect x="430" y="60" width="110" height="60" fill="#fa5c17" stroke="none"/>
<path d="M436,90 L500,74 M436,84 L480,73 M444,92 L520,73 M459,94 L525,77.5 M459,99 L530,81 M460,103 L509,91"/>
<!-- floor -->
<polygon fill="#fa5c17" points="460.5,101.1 508.6,106.6 508,110 461.3,104.3"/>
<!-- left U channel -->
<path d="M439.5,106 V87 Q439.5,83.3 443,83.3 H456.5 Q460,83.3 460,87 V100 Q460,102 462.5,102.2" fill="#fa5c17"/>
<path d="M441.7,106 V88 Q441.7,85.2 444.5,85.2 H455.5 Q458.2,85.2 458.2,88 V102"/>
<path d="M445,106 V90.5 Q445,87.2 448,87.2 H454.4 Q457.4,87.2 457.4,90.5 V104" fill="#fa5c17"/>
<path d="M443.3,90 V104" stroke-dasharray="2,1"/>
<polygon fill="#cf3d00" points="447,106 449.2,101 449.6,93 451,90.5 453,90.5 454.3,93 454.6,101 456.5,106"/>
<!-- right U channel -->
<path d="M509,112 V95 Q509,91 512.5,91 H520 Q523.4,91 523.4,95 V110" fill="#fa5c17"/>
<path d="M510.8,112 V96 Q510.8,92.7 513.5,92.7 H519 Q521.8,92.7 521.8,96 V110"/>
<path d="M512.5,112 V97 Q512.5,94.2 515,94.2 H518 Q520.3,94.2 520.3,97 V110" fill="#fa5c17"/>
<polygon fill="#cf3d00" points="513.2,112 514.6,107 514.8,99 516,96.5 517.6,96.5 518.7,99 518.9,107 520,112"/>
<path d="M525,93.5 V110 M527.3,92 V111 M529.6,93 V111.5"/>
</g>
<!-- gaskets -->
<polygon fill="#cf3d00" points="428.3,110 435,105.5 441,105 447,106.5 448,104 455,104 456,106.5 461,105 466,106 466,112.5 463.5,110.5 461.5,113 459,111 457,113.5 454.5,111 452.5,113.5 450,111 448,113.5 445.5,111 443.5,113 441,110.8 439,112.5 436.5,110.5 433,111.8"/>
<polygon fill="#cf3d00" points="505,108 513,109.5 514,107.5 519.5,107.5 520.5,110 534.5,110.5 534.5,118 532,116 530,118.5 527.5,116 525.5,118.5 523,115.8 521,118 518.5,115.4 516.5,117.5 514,114.8 512,116.8 509.5,114 507.5,115.5 505,113"/>
<!-- arch band -->
<path d="M434.9,105.5 L435.2,83.3 Q436,77.5 441,75.5 Q450,70 461.3,69.3 L489.2,69.6 Q505,72 520.3,80.2 Q531,87 534.2,94.2 L534.5,113 L531.8,112.5 L531.6,95 Q529,89 518.8,82.6 Q504,74.6 489,72.3 L461.5,72 Q451,72.6 442.6,77.8 Q438.4,79.5 437.8,84 L437.6,105.5 Z" fill="#d84504" stroke="#000" stroke-width="1"/>
</g>
<!-- ===== axes ===== -->
<g fill="none" stroke-width="1" shape-rendering="crispEdges">
<path d="M589.5,58 V191" stroke="#0000ff"/>
<path d="M589.5,191 L519.3,209.3" stroke="#ff1010"/>
<path d="M589.5,191 L706,202.4" stroke="#30e000"/>
<circle cx="714.3" cy="193.3" r="3.8" stroke="#000"/>
<circle cx="484.3" cy="251.2" r="3.8" stroke="#000"/>
<path d="M488,250 L503,245" stroke="#ff1010"/>
</g>
<g font-family="Liberation Sans, sans-serif" font-style="normal">
<text transform="translate(600,57.3) skewX(-16) scale(0.72,1)" font-size="19.2" fill="#1414ff">Z<tspan dx="2.8">1</tspan></text>
<text transform="translate(533,208.7) skewX(-4) scale(0.58,1)" font-size="17" fill="#ff1010">X<tspan dx="3.4">1</tspan></text>
<text transform="translate(719,202.4) skewX(-14) scale(0.62,1)" font-size="18" fill="#38e000">Y<tspan dx="3.4">1</tspan></text>
</g>
<g fill="none" stroke-linecap="round">
<path d="M502.7,588.0 L504.0,587.8 L505.3,587.6 L506.3,587.3 L507.2,587.0 L507.9,586.7 L508.4,586.4 L508.7,586.1 L508.8,585.7 L508.6,585.4 L508.2,585.0 L507.7,584.7 L506.9,584.4 L505.9,584.1 L504.8,583.9 L503.5,583.6 L502.1,583.4 L500.6,583.3 L499.0,583.2 L497.3,583.1 L495.7,583.1 L494.0,583.2 L492.4,583.2 L490.8,583.4 L489.3,583.5 L488.0,583.7 L486.7,584.0 L485.7,584.2 L484.8,584.5 L484.1,584.8 L483.6,585.2 L483.3,585.5 L483.2,585.8 L483.4,586.2 L483.8,586.5 L484.3,586.9 L485.1,587.2 L486.1,587.4 L487.2,587.7 M517.7,583.4 L519.0,582.8 L520.0,582.2 L520.5,581.5 L520.6,580.8 L520.3,580.2 L519.6,579.5 L518.5,578.9 L517.0,578.3 L515.2,577.7 L513.0,577.2 L510.5,576.8 L507.8,576.5 L504.8,576.2 L501.8,576.0 L498.6,575.9 L495.4,575.8 L492.1,575.9 L489.0,576.0 L486.0,576.3 L483.1,576.6 L480.5,577.0 L478.1,577.4 L476.1,577.9 L474.3,578.5 L473.0,579.1 L472.0,579.8 L471.5,580.4 L471.4,581.1 L471.7,581.8 L472.4,582.4 M529.9,575.0 L530.7,574.1 L530.8,573.1 L530.4,572.2 L529.4,571.2 L527.8,570.4 L525.7,569.5 L523.1,568.7 L520.0,568.0 L516.5,567.4 L512.6,566.9 L508.5,566.5 L504.1,566.3 L499.6,566.1 L495.1,566.1 L490.5,566.1 L486.1,566.3 L481.8,566.7 L477.8,567.1 L474.1,567.7 L470.7,568.3 L467.8,569.0 L465.4,569.8 L463.5,570.7 L462.1,571.6 L461.3,572.5 L461.2,573.5 L461.6,574.4 M537.5,565.4 L538.5,564.2 L538.7,563.1 L538.2,561.9 L536.9,560.8 L535.0,559.7 L532.4,558.7 L529.2,557.7 L525.4,556.9 L521.1,556.1 L516.4,555.5 L511.3,555.0 L506.0,554.7 L500.5,554.5 L494.9,554.4 L489.3,554.5 L483.9,554.8 L478.6,555.2 L473.7,555.7 L469.1,556.4 L465.0,557.2 L461.5,558.1 L458.5,559.1 L456.1,560.1 L454.5,561.2 L453.5,562.4 L453.3,563.5 M543.4,552.7 L543.6,551.4 L543.0,550.1 L541.7,548.9 L539.5,547.7 L536.6,546.5 L533.0,545.5 L528.8,544.5 L524.0,543.7 L518.7,543.0 L513.1,542.4 L507.1,542.1 L501.0,541.8 L494.8,541.8 L488.6,541.9 L482.5,542.2 L476.6,542.6 L471.1,543.2 L466.0,544.0 L461.5,544.9 L457.5,545.9 L454.2,547.0 L451.5,548.1 L449.7,549.4 L448.6,550.6 L448.4,551.9 M545.0,540.3 L545.3,538.9 L544.7,537.6 L543.3,536.3 L541.0,535.0 L538.0,533.8 L534.3,532.7 L529.9,531.8 L525.0,530.9 L519.5,530.2 L513.7,529.6 L507.5,529.2 L501.2,529.0 L494.7,529.0 L488.3,529.1 L482.0,529.4 L475.9,529.8 L470.2,530.5 L465.0,531.2 L460.2,532.1 L456.1,533.2 L452.7,534.3 L450.0,535.5 L448.1,536.8 L447.0,538.1 M543.6,526.5 L543.0,525.2 L541.7,523.9 L539.5,522.7 L536.6,521.5 L533.0,520.5 L528.8,519.5 L524.0,518.7 L518.7,518.0 L513.1,517.5 L507.1,517.1 L501.0,516.9 L494.8,516.8 L488.6,516.9 L482.5,517.2 L476.6,517.7 L471.1,518.3 L466.0,519.0 L461.5,519.9 L457.5,520.9 L454.2,522.0 L451.5,523.2 L449.7,524.4 L448.6,525.7 M538.7,514.9 L538.2,513.7 L536.9,512.6 L535.0,511.5 L532.4,510.5 L529.2,509.5 L525.4,508.6 L521.1,507.9 L516.4,507.3 L511.3,506.8 L506.0,506.5 L500.5,506.3 L494.9,506.2 L489.3,506.3 L483.9,506.6 L478.6,507.0 L473.7,507.5 L469.1,508.2 L465.0,509.0 L461.5,509.9 L458.5,510.9 L456.1,511.9 L454.5,513.0 M530.4,504.0 L529.4,503.0 L527.8,502.2 L525.7,501.3 L523.1,500.5 L520.0,499.8 L516.5,499.2 L512.6,498.7 L508.5,498.3 L504.1,498.1 L499.6,497.9 L495.1,497.9 L490.5,497.9 L486.1,498.2 L481.8,498.5 L477.8,498.9 L474.1,499.5 L470.7,500.1 L467.8,500.8 L465.4,501.6 L463.5,502.5 L462.1,503.4 M519.6,496.0 L518.5,495.4 L517.0,494.8 L515.2,494.2 L513.0,493.7 L510.5,493.3 L507.8,492.9 L504.8,492.7 L501.8,492.5 L498.6,492.3 L495.4,492.3 L492.1,492.4 L489.0,492.5 L486.0,492.8 L483.1,493.1 L480.5,493.5 L478.1,493.9 L476.1,494.4 L474.3,495.0 M504.8,490.7 L503.5,490.5 L502.1,490.3 L500.6,490.1 L499.0,490.0 L497.3,490.0 L495.7,490.0 L494.0,490.0 L492.4,490.1 L490.8,490.2 L489.3,490.4 M498.3,490.1 L500.6,490.1 L502.8,491.0 L504.8,492.7 L506.8,495.1 L508.5,498.3 L510.0,502.3 L511.3,506.8 L512.3,511.9 L513.1,517.5 L513.5,523.4 L513.7,529.6 L513.5,536.0 L513.1,542.4 L512.3,548.8 L511.3,555.0 L510.0,561.0 L508.5,566.5 L506.8,571.6 L504.8,576.2 L502.8,580.1 L500.6,583.3 L498.3,585.8 L496.0,587.4 L493.7,588.3 M495.0,490.1 L494.0,490.0 L493.0,490.8 L492.1,492.4 L491.3,494.8 L490.5,497.9 L489.9,501.8 L489.3,506.3 L488.9,511.4 L488.6,516.9 L488.4,522.9 L488.3,529.1 L488.4,535.5 L488.6,541.9 L488.9,548.3 L489.3,554.5 L489.9,560.5 L490.5,566.1 L491.3,571.3 L492.1,575.9 L493.0,579.9 L494.0,583.2 L495.0,585.7 L496.0,587.4 L497.0,588.3 M488.0,490.6 L484.1,491.6 L480.5,493.5 L477.1,496.1 L474.1,499.5 L471.4,503.5 L469.1,508.2 L467.3,513.4 L466.0,519.0 L465.2,525.0 L465.0,531.2 L465.2,537.6 L466.0,544.0 L467.3,550.3 L469.1,556.4 L471.4,562.2 L474.1,567.7 L477.1,572.6 L480.5,577.0 L484.1,580.7 L488.0,583.7 L492.0,586.0 L496.0,587.4 L500.0,588.0 L504.0,587.8 M473.0,495.6 L468.0,498.7 L463.5,502.5 L459.5,506.9 L456.1,511.9 L453.5,517.4 L451.5,523.2 L450.4,529.3 L450.0,535.5 L450.4,541.9 L451.5,548.1 L453.5,554.3 L456.1,560.1 L459.5,565.6 L463.5,570.7 L468.0,575.2 L473.0,579.1 L478.4,582.3 L484.1,584.8 L490.0,586.5 L496.0,587.4 L502.0,587.5 L507.9,586.7 L513.6,585.2 L519.0,582.8 M544.7,537.6 L544.3,531.3 L543.0,525.2 L541.0,519.3 L538.2,513.7 M453.8,564.7 L457.4,569.8 L461.6,574.4 L466.4,578.4 L471.7,581.8 L477.4,584.4 L483.4,586.2 L489.6,587.2 L496.0,587.4 L502.4,586.8 L508.6,585.4 L514.6,583.1 L520.3,580.2 L525.6,576.5 L530.4,572.2 L534.6,567.3 L538.2,561.9 L541.0,556.2 L543.0,550.1 L544.3,543.9 L544.7,537.6 M534.3,532.7 L534.0,526.5 L533.0,520.5 L531.4,514.8 L529.2,509.5 L526.4,504.7 L523.1,500.5 L519.3,497.0 L515.2,494.2 L510.7,492.2 M481.3,586.2 L486.1,587.4 L491.0,587.9 L496.0,587.4 L501.0,586.2 L505.9,584.1 L510.7,581.3 L515.2,577.7 L519.3,573.5 L523.1,568.7 L526.4,563.4 L529.2,557.7 L531.4,551.7 L533.0,545.5 L534.0,539.1 L534.3,532.7 " stroke="#e4d8a6" stroke-width="0.9"/>
<path d="M491.4,588.3 L493.0,588.4 L494.7,588.4 L496.3,588.4 L498.0,588.4 L499.6,588.3 L501.2,588.2 L502.7,588.0 M487.2,587.7 L488.5,587.9 L489.9,588.1 L491.4,588.3 M487.2,585.7 L490.2,585.9 L493.4,586.1 L496.6,586.1 L499.9,586.0 L503.0,585.9 L506.0,585.6 L508.9,585.3 L511.5,584.9 L513.9,584.5 L515.9,584.0 L517.7,583.4 M472.4,582.4 L473.5,583.0 L475.0,583.6 L476.8,584.2 L479.0,584.7 L481.5,585.1 L484.2,585.5 L487.2,585.7 M483.5,580.1 L487.9,580.3 L492.4,580.5 L496.9,580.5 L501.5,580.5 L505.9,580.2 L510.2,579.9 L514.2,579.5 L517.9,578.9 L521.3,578.3 L524.2,577.6 L526.6,576.8 L528.5,575.9 L529.9,575.0 M461.6,574.4 L462.6,575.4 L464.2,576.2 L466.3,577.1 L468.9,577.9 L472.0,578.6 L475.5,579.2 L479.4,579.7 L483.5,580.1 M480.7,571.6 L486.0,571.9 L491.5,572.1 L497.1,572.2 L502.7,572.1 L508.1,571.8 L513.4,571.4 L518.3,570.9 L522.9,570.2 L527.0,569.4 L530.5,568.5 L533.5,567.5 L535.9,566.5 L537.5,565.4 M453.3,563.5 L453.8,564.7 L455.1,565.8 L457.0,566.9 L459.6,567.9 L462.8,568.9 L466.6,569.8 L470.9,570.5 L475.6,571.1 L480.7,571.6 M478.9,560.9 L484.9,561.3 L491.0,561.5 L497.2,561.6 L503.4,561.5 L509.5,561.2 L515.4,560.7 L520.9,560.1 L526.0,559.4 L530.5,558.5 L534.5,557.5 L537.8,556.4 L540.5,555.2 L542.3,554.0 L543.4,552.7 M448.4,551.9 L449.0,553.2 L450.3,554.5 L452.5,555.7 L455.4,556.9 L459.0,557.9 L463.2,558.9 L468.0,559.7 L473.3,560.4 L478.9,560.9 M478.3,548.8 L484.5,549.2 L490.8,549.4 L497.3,549.4 L503.7,549.3 L510.0,549.0 L516.1,548.6 L521.8,547.9 L527.0,547.2 L531.8,546.3 L535.9,545.2 L539.3,544.1 L542.0,542.9 L543.9,541.6 L545.0,540.3 M447.0,538.1 L446.7,539.5 L447.3,540.8 L448.7,542.1 L451.0,543.4 L454.0,544.6 L457.7,545.7 L462.1,546.6 L467.0,547.5 L472.5,548.2 L478.3,548.8 M478.9,536.0 L484.9,536.3 L491.0,536.6 L497.2,536.6 L503.4,536.5 L509.5,536.2 L515.4,535.8 L520.9,535.2 L526.0,534.4 L530.5,533.5 L534.5,532.5 L537.8,531.4 L540.5,530.3 L542.3,529.0 L543.4,527.8 L543.6,526.5 M448.6,525.7 L448.4,527.0 L449.0,528.3 L450.3,529.5 L452.5,530.7 L455.4,531.9 L459.0,532.9 L463.2,533.9 L468.0,534.7 L473.3,535.4 L478.9,536.0 M480.7,523.4 L486.0,523.7 L491.5,523.9 L497.1,524.0 L502.7,523.9 L508.1,523.6 L513.4,523.2 L518.3,522.7 L522.9,522.0 L527.0,521.2 L530.5,520.3 L533.5,519.3 L535.9,518.3 L537.5,517.2 L538.5,516.0 L538.7,514.9 M454.5,513.0 L453.5,514.2 L453.3,515.3 L453.8,516.5 L455.1,517.6 L457.0,518.7 L459.6,519.7 L462.8,520.7 L466.6,521.5 L470.9,522.3 L475.6,522.9 L480.7,523.4 M483.5,511.9 L487.9,512.1 L492.4,512.3 L496.9,512.3 L501.5,512.3 L505.9,512.1 L510.2,511.7 L514.2,511.3 L517.9,510.7 L521.3,510.1 L524.2,509.4 L526.6,508.6 L528.5,507.7 L529.9,506.8 L530.7,505.9 L530.8,504.9 L530.4,504.0 M462.1,503.4 L461.3,504.3 L461.2,505.3 L461.6,506.2 L462.6,507.2 L464.2,508.0 L466.3,508.9 L468.9,509.7 L472.0,510.4 L475.5,511.0 L479.4,511.5 L483.5,511.9 M487.2,502.2 L490.2,502.4 L493.4,502.5 L496.6,502.6 L499.9,502.5 L503.0,502.4 L506.0,502.1 L508.9,501.8 L511.5,501.4 L513.9,501.0 L515.9,500.5 L517.7,499.9 L519.0,499.3 L520.0,498.6 L520.5,498.0 L520.6,497.3 L520.3,496.6 L519.6,496.0 M474.3,495.0 L473.0,495.6 L472.0,496.2 L471.5,496.9 L471.4,497.6 L471.7,498.2 L472.4,498.9 L473.5,499.5 L475.0,500.1 L476.8,500.7 L479.0,501.2 L481.5,501.6 L484.2,501.9 L487.2,502.2 M491.4,495.1 L493.0,495.2 L494.7,495.3 L496.3,495.3 L498.0,495.2 L499.6,495.2 L501.2,495.0 L502.7,494.9 L504.0,494.7 L505.3,494.4 L506.3,494.2 L507.2,493.9 L507.9,493.6 L508.4,493.2 L508.7,492.9 L508.8,492.6 L508.6,492.2 L508.2,491.9 L507.7,491.5 L506.9,491.2 L505.9,491.0 L504.8,490.7 M489.3,490.4 L488.0,490.6 L486.7,490.8 L485.7,491.1 L484.8,491.4 L484.1,491.7 L483.6,492.0 L483.3,492.3 L483.2,492.7 L483.4,493.0 L483.8,493.4 L484.3,493.7 L485.1,494.0 L486.1,494.3 L487.2,494.5 L488.5,494.8 L489.9,495.0 L491.4,495.1 M478.3,548.8 L478.5,542.4 L478.9,536.0 L479.7,529.6 L480.7,523.4 L482.0,517.4 L483.5,511.9 L485.2,506.8 L487.2,502.2 L489.2,498.3 L491.4,495.1 L493.7,492.6 L496.0,491.0 L498.3,490.1 M493.7,588.3 L491.4,588.3 L489.2,587.4 L487.2,585.7 L485.2,583.3 L483.5,580.1 L482.0,576.1 L480.7,571.6 L479.7,566.5 L478.9,560.9 L478.5,555.0 L478.3,548.8 M503.7,549.3 L503.6,542.9 L503.4,536.5 L503.1,530.1 L502.7,523.9 L502.1,517.9 L501.5,512.3 L500.7,507.1 L499.9,502.5 L499.0,498.5 L498.0,495.2 L497.0,492.7 L496.0,491.0 L495.0,490.1 M497.0,588.3 L498.0,588.4 L499.0,587.6 L499.9,586.0 L500.7,583.6 L501.5,580.5 L502.1,576.6 L502.7,572.1 L503.1,567.0 L503.4,561.5 L503.6,555.5 L503.7,549.3 M527.0,547.2 L526.8,540.8 L526.0,534.4 L524.7,528.1 L522.9,522.0 L520.6,516.2 L517.9,510.7 L514.9,505.8 L511.5,501.4 L507.9,497.7 L504.0,494.7 L500.0,492.4 L496.0,491.0 L492.0,490.4 L488.0,490.6 M504.0,587.8 L507.9,586.8 L511.5,584.9 L514.9,582.3 L517.9,578.9 L520.6,574.9 L522.9,570.2 L524.7,565.0 L526.0,559.4 L526.8,553.4 L527.0,547.2 M542.0,542.9 L541.6,536.5 L540.5,530.3 L538.5,524.1 L535.9,518.3 L532.5,512.8 L528.5,507.7 L524.0,503.2 L519.0,499.3 L513.6,496.1 L507.9,493.6 L502.0,491.9 L496.0,491.0 L490.0,490.9 L484.1,491.7 L478.4,493.2 L473.0,495.6 M519.0,582.8 L524.0,579.7 L528.5,575.9 L532.5,571.5 L535.9,566.5 L538.5,561.0 L540.5,555.2 L541.6,549.1 L542.0,542.9 M538.2,513.7 L534.6,508.6 L530.4,504.0 L525.6,500.0 L520.3,496.6 L514.6,494.0 L508.6,492.2 L502.4,491.2 L496.0,491.0 L489.6,491.6 L483.4,493.0 L477.4,495.3 L471.7,498.2 L466.4,501.9 L461.6,506.2 L457.4,511.1 L453.8,516.5 L451.0,522.2 L449.0,528.3 L447.7,534.5 L447.3,540.8 L447.7,547.1 L449.0,553.2 L451.0,559.1 L453.8,564.7 M510.7,492.2 L505.9,491.0 L501.0,490.5 L496.0,491.0 L491.0,492.2 L486.1,494.3 L481.3,497.1 L476.8,500.7 L472.7,504.9 L468.9,509.7 L465.6,515.0 L462.8,520.7 L460.6,526.7 L459.0,532.9 L458.0,539.3 L457.7,545.7 L458.0,551.9 L459.0,557.9 L460.6,563.6 L462.8,568.9 L465.6,573.7 L468.9,577.9 L472.7,581.4 L476.8,584.2 L481.3,586.2 " stroke="#b49c48" stroke-width="1"/>
<circle cx="496.0" cy="539.2" r="49.3" stroke="#a8903a" stroke-width="1.1"/>
</g>
<defs><linearGradient id="gz" x1="0" x2="1"><stop offset="0" stop-color="#1a1ae0"/><stop offset="0.5" stop-color="#5a5aff"/><stop offset="1" stop-color="#1a1ae0"/></linearGradient></defs>
<path d="M496,539.5 L456,547.5" stroke="#a81818" stroke-width="4.2" stroke-linecap="round"/>
<path d="M478,541.5 L456,546.5" stroke="#c83030" stroke-width="2" stroke-linecap="round"/>
<ellipse cx="455" cy="547.5" rx="5.5" ry="5" fill="#9c1010"/>
<ellipse cx="458" cy="546" rx="2.5" ry="2.2" fill="#c02020"/>
<rect x="493.9" y="474" width="4.6" height="64" fill="url(#gz)"/>
<rect x="493.9" y="490" width="4.6" height="48" fill="#8080ff" opacity="0.55"/>
<rect x="495.6" y="492" width="1.2" height="44" fill="#e0e0ff" opacity="0.8"/>
<polygon points="496.2,465 490,477.5 502.4,477.5" fill="#1a1ae8"/>
<polygon points="496.2,465 494,477.5 498,477.5" fill="#5555ff"/>
<path d="M497,539.3 L553,543.6" stroke="#1fc030" stroke-width="3.8"/>
<path d="M497,538.6 L553,542.8" stroke="#60e870" stroke-width="1.4"/>
<path d="M500,539 L545,542.4" stroke="#a0f8a8" stroke-width="2.4" opacity="0.6"/>
<polygon points="566,544.3 551.5,537 550.5,550" fill="#18b028"/>
<polygon points="566,544.3 551.5,537 551,542" fill="#50e060"/>
<defs><radialGradient id="gb" cx="0.4" cy="0.35" r="0.7"><stop offset="0" stop-color="#fff6d8"/><stop offset="1" stop-color="#c8b078"/></radialGradient></defs>
<circle cx="496.2" cy="539" r="4.2" fill="url(#gb)"/>
<g font-family="Liberation Sans, sans-serif" font-size="15.5" fill="#9c7a10" stroke="#9c7a10" stroke-width="0.25">
<text x="495.4" y="462">Z</text>
<text x="569" y="545.2">Y</text>
<text x="447" y="551" font-size="14">X</text>
</g></svg>

</body></html>
